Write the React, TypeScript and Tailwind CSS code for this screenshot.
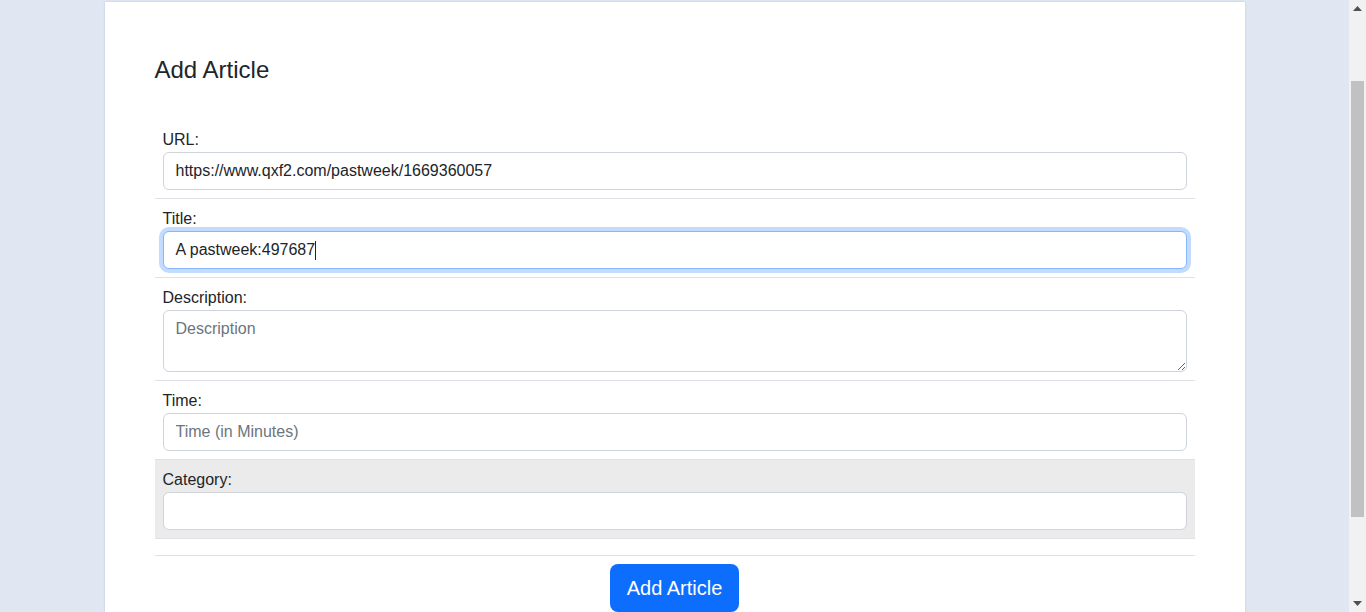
import React from "react";

const font = { fontFamily: '"Liberation Sans", Arial, Helvetica, sans-serif' };

function Row({
  label,
  children,
  gray,
}: {
  label: string;
  children: React.ReactNode;
  gray?: boolean;
}) {
  return (
    <div className={`px-2 pt-2 pb-2 border-b border-[#dee2e6] ${gray ? "bg-[#ebebeb]" : ""}`}>
      <label className="block text-[16px] leading-6 text-[#212529]">{label}</label>
      {children}
    </div>
  );
}

const inputCls =
  "block w-full h-[38px] px-3 py-[6px] text-[16px] leading-6 text-[#212529] bg-white border border-[#ced4da] rounded-[6px] outline-none placeholder:text-[#6c757d]";

export default function App() {
  return (
    <div className="flex h-[612px] w-[1366px] overflow-hidden bg-[#e0e7f3]" style={font}>
      <div className="flex-1 flex justify-center">
        <div className="mt-[2px] w-[1140px] bg-white shadow-[0_0_2px_rgba(120,140,180,0.35)] px-[50px] pt-[53px]">
          <h4 className="text-[24px] leading-[29px] text-[#212529] font-normal">Add Article</h4>
          <form className="mt-[36px]">
            <Row label="URL:">
              <input className={inputCls} defaultValue="https://www.qxf2.com/pastweek/1669360057" />
            </Row>
            <Row label="Title:">
              <div className="flex items-center w-full h-[38px] px-3 text-[16px] leading-6 text-[#212529] bg-white border border-[#86b7fe] rounded-[6px] shadow-[0_0_0_4px_rgba(13,110,253,0.25)]">
                <span>A pastweek:497687</span>
                <span className="inline-block w-px h-[19px] bg-[#212529]" />
              </div>
            </Row>
            <Row label="Description:">
              <textarea
                className="block w-full h-[62px] px-3 py-[6px] text-[16px] leading-6 text-[#212529] bg-white border border-[#ced4da] rounded-[6px] outline-none placeholder:text-[#6c757d] resize-y"
                placeholder="Description"
              />
            </Row>
            <Row label="Time:">
              <input className={inputCls} placeholder="Time (in Minutes)" />
            </Row>
            <Row label="Category:" gray>
              <input className={inputCls} />
            </Row>
            <hr className="mt-4 border-0 border-t border-[#dee2e6]" />
            <div className="flex justify-center mt-2">
              <button
                type="button"
                className="h-[48px] px-[17px] text-[20px] leading-[30px] text-white bg-[#0d6efd] rounded-[8px]"
              >
                Add Article
              </button>
            </div>
          </form>
        </div>
      </div>
      <div className="w-[17px] h-full bg-[#f1f1f1] flex flex-col items-center relative">
        <div className="h-[17px] w-full flex items-center justify-center">
          <svg width="9" height="5" viewBox="0 0 9 5">
            <polygon points="4.5,0 9,5 0,5" fill="#505050" />
          </svg>
        </div>
        <div className="mt-[64px] w-[13px] h-[436px] bg-[#c1c1c1]" />
        <div className="flex-1" />
        <div className="h-[17px] w-full flex items-center justify-center">
          <svg width="9" height="5" viewBox="0 0 9 5">
            <polygon points="0,0 9,0 4.5,5" fill="#505050" />
          </svg>
        </div>
      </div>
    </div>
  );
}
